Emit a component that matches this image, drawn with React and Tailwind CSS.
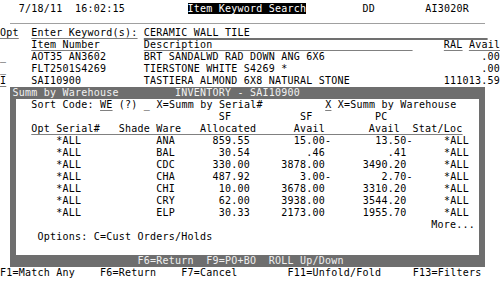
import React from "react";

// 5250 style screen: every row is 12px tall, every column 6.25px wide
const UL = "underline decoration-[#808080] underline-offset-[2px]";
const FIELD = "underline decoration-[#707070] decoration-2 underline-offset-[2px]";
const INV = "bg-black text-white";

const R = (end, text) => end - text.length + 1;

const Line = ({ segs, from = 0, className = "" }) => {
  let cur = from;
  const out = [];
  segs.forEach(([col, text, cls], i) => {
    if (col > cur) out.push(" ".repeat(col - cur));
    out.push(
      <span key={i} className={cls}>
        {text}
      </span>
    );
    cur = col + text.length;
  });
  return <div className={"h-[12px] leading-[12px] whitespace-pre " + className}>{out}</div>;
};

const items = [
  ["_", "", "AOT35 AN3602", "BRT SANDALWD RAD DOWN ANG 6X6", ".00"],
  ["_", "", "FLT2501S4269", "TIERSTONE WHITE S4269 *", ".00"],
  ["I", UL, "SAI10900", "TASTIERA ALMOND 6X8 NATURAL STONE", "111013.59"],
];

const stock = [
  ["ANA", "859.55", "15.00-", "13.50-"],
  ["BAL", "30.54", ".46", ".41"],
  ["CDC", "330.00", "3878.00", "3490.20"],
  ["CHA", "487.92", "3.00-", "2.70-"],
  ["CHI", "10.00", "3678.00", "3310.20"],
  ["CRY", "62.00", "3938.00", "3544.20"],
  ["ELP", "30.33", "2173.00", "1955.70"],
];

// numbers keep a trailing sign column
const num = (end, v) => [R(v.endsWith("-") ? end + 1 : end, v), v];

const pad = (segs, from) => {
  let s = "";
  let cur = from;
  for (const [col, text] of segs) {
    if (col > cur) s += " ".repeat(col - cur);
    s += text;
    cur = col + text.length;
  }
  return s;
};

export default function App() {
  const header = pad(
    [
      [5, "Opt"],
      [9, "Serial#"],
      [19, "Shade"],
      [25, "Ware"],
      [32, "Allocated"],
      [47, "Avail"],
      [59, "Avail"],
      [66, "Stat/Loc"],
    ],
    5
  );

  return (
    <div className="w-[500px] h-[287px] overflow-hidden bg-white pt-[3px] font-['DejaVu_Sans_Mono',monospace] text-[10px] tracking-[0.23px] text-black">
      <Line
        segs={[
          [3, "7/18/11"],
          [12, "16:02:15"],
          [30, "Item Keyword Search", INV],
          [58, "DD"],
          [68, "AI3020R"],
        ]}
      />
      <div className="h-[12px] pt-[8px]">
        <div className="ml-[10px] h-[1px] w-[475px] bg-[#a0a0a0]" />
      </div>
      <Line
        segs={[
          [0, "Opt", UL],
          [5, "Enter Keyword(s):", UL],
          [23, "CERAMIC WALL TILE".padEnd(55), FIELD],
        ]}
      />
      <Line
        segs={[
          [5, "Item Number", UL],
          [23, "Description".padEnd(43), UL],
          [71, "RAL", UL],
          [75, "Avail", UL],
        ]}
      />
      {items.map(([opt, optCls, item, desc, avail]) => (
        <Line
          key={item}
          segs={[
            [0, opt, optCls],
            [5, item],
            [23, desc],
            [R(79, avail), avail],
          ]}
        />
      ))}

      {/* Summ by Warehouse window */}
      <div className="ml-[10px] w-[475px] bg-[#6e6e6e]">
        <Line
          className="pl-[2.5px] text-[#f2f2f2]"
          from={2}
          segs={[
            [2, "Summ by Warehouse"],
            [28, "INVENTORY - SAI10900"],
          ]}
        />
        <div className="mx-[6px] bg-white pl-[2.75px]">
          <Line
            from={3}
            segs={[
              [5, "Sort Code:"],
              [16, "WE", UL],
              [19, "(?)"],
              [23, "_"],
              [25, "X=Summ by Serial#"],
              [52, "X", UL],
              [54, "X=Summ by Warehouse"],
            ]}
          />
          <Line
            from={3}
            segs={[
              [35, "SF"],
              [48, "SF"],
              [60, "PC"],
            ]}
          />
          <Line from={3} segs={[[5, header, UL]]} />
          {stock.map(([ware, alloc, sf, pc]) => (
            <Line
              key={ware}
              from={3}
              segs={[
                [9, "*ALL"],
                [25, ware],
                [R(39, alloc), alloc],
                num(51, sf),
                num(64, pc),
                [71, "*ALL"],
              ]}
            />
          ))}
          <Line from={3} segs={[[69, "More..."]]} />
          <Line from={3} segs={[[6, "Options: C=Cust Orders/Holds"]]} />
          <div className="h-[12px]" />
        </div>
        <Line
          className="pl-[2.5px] text-[#f0f0f0]"
          from={2}
          segs={[
            [22, "F6=Return"],
            [33, "F9=PO+BO"],
            [43, "ROLL Up/Down"],
          ]}
        />
      </div>

      <Line
        segs={[
          [0, "F1=Match Any"],
          [16, "F6=Return"],
          [29, "F7=Cancel"],
          [46, "F11=Unfold/Fold"],
          [66, "F13=Filters"],
        ]}
      />
    </div>
  );
}
